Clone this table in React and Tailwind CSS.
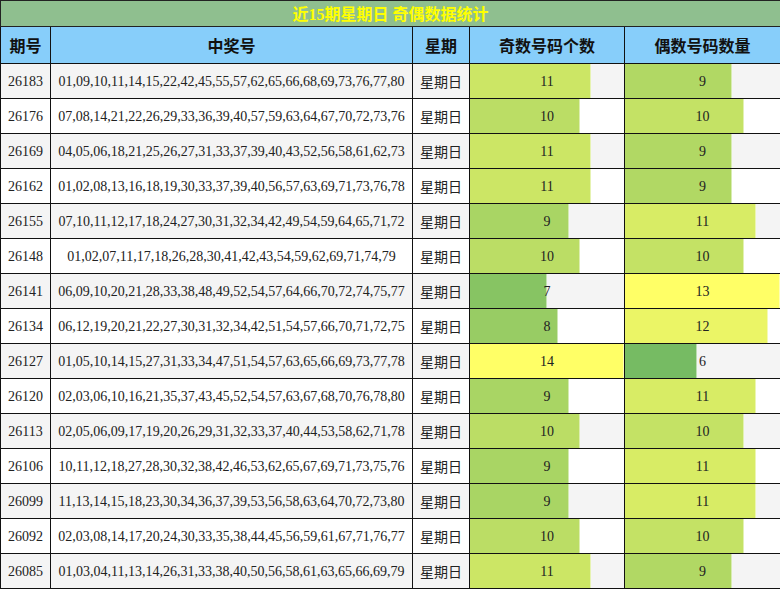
import React from 'react';

const rows = [
  ['26183', '01,09,10,11,14,15,22,42,45,55,57,62,65,66,68,69,73,76,77,80', 11, 9],
  ['26176', '07,08,14,21,22,26,29,33,36,39,40,57,59,63,64,67,70,72,73,76', 10, 10],
  ['26169', '04,05,06,18,21,25,26,27,31,33,37,39,40,43,52,56,58,61,62,73', 11, 9],
  ['26162', '01,02,08,13,16,18,19,30,33,37,39,40,56,57,63,69,71,73,76,78', 11, 9],
  ['26155', '07,10,11,12,17,18,24,27,30,31,32,34,42,49,54,59,64,65,71,72', 9, 11],
  ['26148', '01,02,07,11,17,18,26,28,30,41,42,43,54,59,62,69,71,74,79', 10, 10],
  ['26141', '06,09,10,20,21,28,33,38,48,49,52,54,57,64,66,70,72,74,75,77', 7, 13],
  ['26134', '06,12,19,20,21,22,27,30,31,32,34,42,51,54,57,66,70,71,72,75', 8, 12],
  ['26127', '01,05,10,14,15,27,31,33,34,47,51,54,57,63,65,66,69,73,77,78', 14, 6],
  ['26120', '02,03,06,10,16,21,35,37,43,45,52,54,57,63,67,68,70,76,78,80', 9, 11],
  ['26113', '02,05,06,09,17,19,20,26,29,31,32,33,37,40,44,53,58,62,71,78', 10, 10],
  ['26106', '10,11,12,18,27,28,30,32,38,42,46,53,62,65,67,69,71,73,75,76', 9, 11],
  ['26099', '11,13,14,15,18,23,30,34,36,37,39,53,56,58,63,64,70,72,73,80', 9, 11],
  ['26092', '02,03,08,14,17,20,24,30,33,35,38,44,45,56,59,61,67,71,76,77', 10, 10],
  ['26085', '01,03,04,11,13,14,26,31,33,38,40,50,56,58,61,63,65,66,69,79', 11, 9],
];

// colour scale green (low) -> yellow (column max)
function barColor(v, min, max) {
  const t = Math.max(0, Math.min(1, (v - min) / (max - min)));
  const lo = [118, 187, 99];
  const hi = [255, 255, 102];
  const c = lo.map((x, i) => Math.round(x + (hi[i] - x) * t));
  return `rgb(${c[0]},${c[1]},${c[2]})`;
}

function Bar({ value, min, max }) {
  return (
    <div className="relative h-full w-full flex items-center justify-center">
      <div
        className="absolute left-0 top-0 bottom-0 border-r border-white/50"
        style={{ width: `${(value / max) * 100}%`, backgroundColor: barColor(value, min, max) }}
      />
      <span className="relative">{value}</span>
    </div>
  );
}

export default function App() {
  const serif = "font-['Liberation_Serif','Noto_Sans_CJK_SC',serif]";
  const cjk = "font-['Noto_Sans_CJK_SC',sans-serif]";
  return (
    <div className="w-[780px] bg-white">
      <table className="w-[781px] border-collapse table-fixed text-[#222]">
        <colgroup>
          <col className="w-[50px]" />
          <col className="w-[362px]" />
          <col className="w-[57px]" />
          <col className="w-[155px]" />
          <col className="w-[156px]" />
        </colgroup>
        <tbody>
          <tr className="h-[26px]">
            <td colSpan={5} className={`border border-[#222] bg-[#8fbf8f] text-center text-[16px] font-bold text-[#ffff00] leading-none ${cjk}`}>
              <span className={serif}>近15期星期日 奇偶数据统计</span>
            </td>
          </tr>
          <tr className="h-[37px] bg-[#87cefa]">
            {['期号', '中奖号', '星期', '奇数号码个数', '偶数号码数量'].map((h) => (
              <td key={h} className={`border border-[#111] text-center text-[16px] font-bold text-[#111] ${cjk}`}>
                {h}
              </td>
            ))}
          </tr>
          {rows.map(([no, nums, odd, even], i) => (
            <tr key={no} className={`h-[35px] ${i % 2 === 0 ? 'bg-[#f4f4f4]' : 'bg-white'}`}>
              <td className={`border border-[#111] text-center text-[14px] ${serif}`}>{no}</td>
              <td className={`border border-[#111] text-center text-[14px] whitespace-nowrap ${serif}`}>{nums}</td>
              <td className={`border border-[#111] text-center text-[14px] ${cjk}`}>星期日</td>
              <td className={`border border-[#111] p-0 h-[35px] text-[14px] ${serif}`}>
                <Bar value={odd} min={6} max={14} />
              </td>
              <td className={`border border-[#111] p-0 h-[35px] text-[14px] ${serif}`}>
                <Bar value={even} min={6} max={13} />
              </td>
            </tr>
          ))}
        </tbody>
      </table>
    </div>
  );
}
